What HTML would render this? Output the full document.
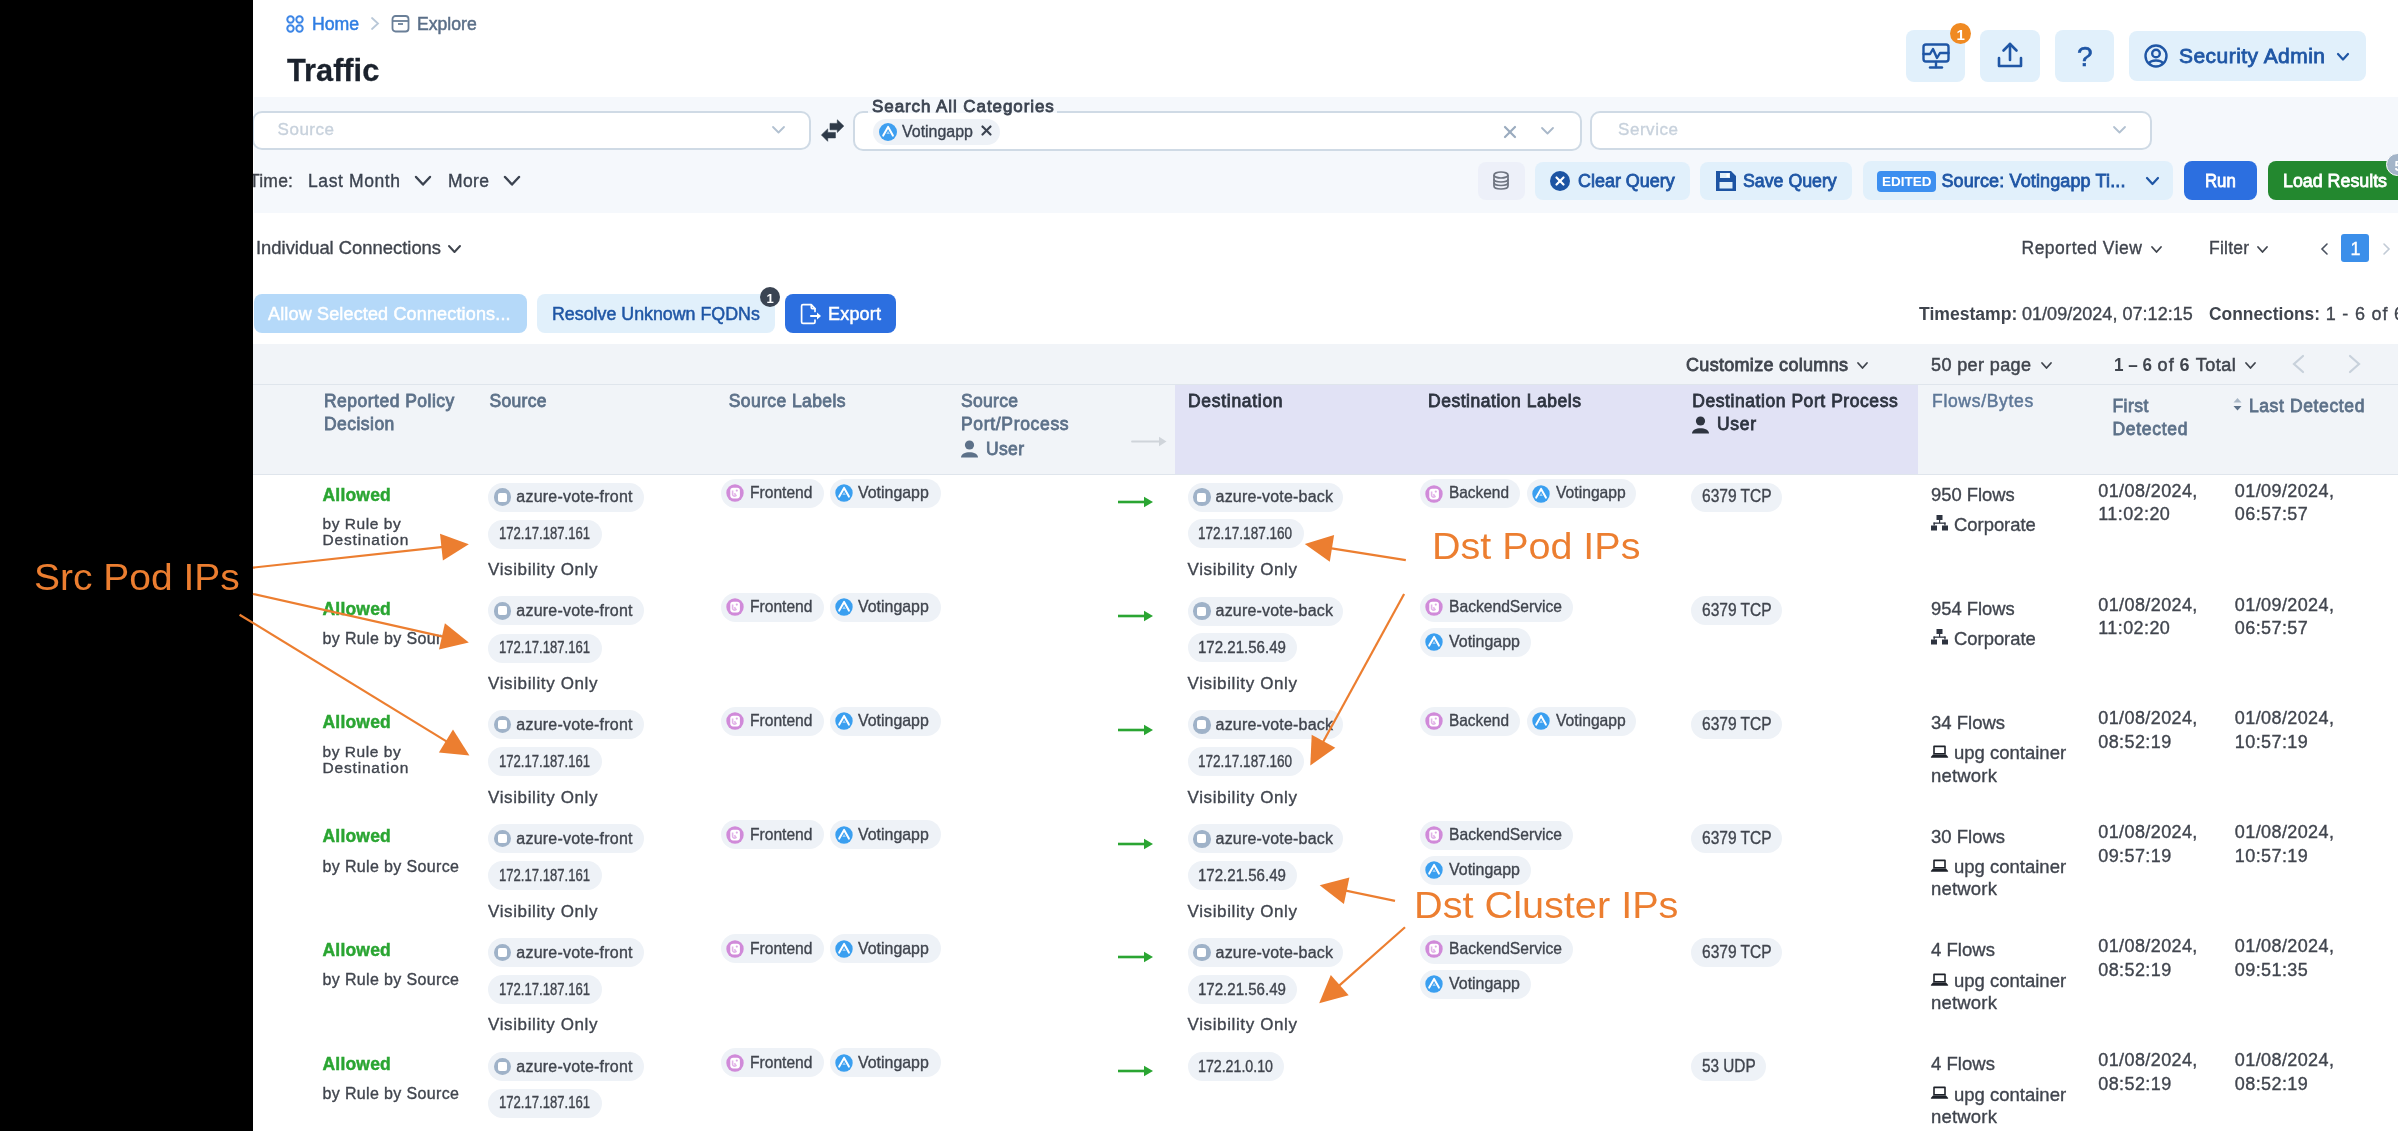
<!DOCTYPE html>
<html><head><meta charset="utf-8"><title>Traffic</title>
<style>
html,body{margin:0;padding:0;}
body{width:2398px;height:1131px;position:relative;overflow:hidden;background:#fff;font-family:"Liberation Sans",sans-serif;}
.t{position:absolute;white-space:nowrap;line-height:1;}
.r{position:absolute;}
.s{position:absolute;overflow:visible;}
</style></head><body>
<div style="position:absolute;left:0;top:0;width:2398px;height:1131px;will-change:transform;background:#fff">
<div class="r" style="left:0.00px;top:0.00px;width:253.00px;height:1131.00px;background:#000;border-radius:0px;"></div>
<div class="r" style="left:254.30px;top:97.30px;width:2143.70px;height:115.70px;background:#f5f8fc;border-radius:0px;"></div>
<div class="r" style="left:253.00px;top:343.50px;width:2145.00px;height:41.00px;background:#f1f4f8;border-radius:0px;"></div>
<div class="r" style="left:253.00px;top:384.50px;width:2145.00px;height:90.00px;background:#f1f4f8;border-radius:0px;"></div>
<div class="r" style="left:1174.50px;top:384.50px;width:743.50px;height:90.00px;background:#e1e2f5;border-radius:0px;"></div>
<div class="r" style="left:253.00px;top:383.50px;width:2145.00px;height:1.50px;background:#dfe5ec;border-radius:0px;"></div>
<div class="r" style="left:253.00px;top:473.50px;width:2145.00px;height:1.50px;background:#dfe5ec;border-radius:0px;"></div>
<svg class="s" style="left:285.00px;top:14.00px" width="20" height="20" viewBox="0 0 20 20"><g fill="none" stroke="#3d86e6" stroke-width="2"><circle cx="5.5" cy="5.5" r="3.2"/><circle cx="14.5" cy="5.5" r="3.2"/><circle cx="5.5" cy="14.5" r="3.2"/><circle cx="14.5" cy="14.5" r="3.2"/></g></svg>
<div class="t" style="left:311.60px;top:15.00px;font-size:18px;color:#2f7ee3;transform:scaleX(0.9821);transform-origin:0 0;-webkit-text-stroke:0.5px #2f7ee3;">Home</div>
<svg class="s" style="left:369.00px;top:16.00px" width="12" height="15" viewBox="0 0 12 15"><polyline points="3,2 9,7.5 3,13" fill="none" stroke="#b9c8d8" stroke-width="1.8" stroke-linecap="round"/></svg>
<svg class="s" style="left:391.00px;top:14.00px" width="19" height="19" viewBox="0 0 19 19"><g fill="none" stroke="#6a7f98" stroke-width="1.8"><rect x="1.5" y="2" width="16" height="15.5" rx="3"/><line x1="1.5" y1="7" x2="17.5" y2="7"/><line x1="7" y1="10" x2="12" y2="10"/></g></svg>
<div class="t" style="left:417.30px;top:15.00px;font-size:18px;color:#5b6f88;transform:scaleX(0.9784);transform-origin:0 0;-webkit-text-stroke:0.5px #5b6f88;">Explore</div>
<div class="t" style="left:287.20px;top:55.00px;font-size:31px;color:#1b222d;font-weight:700;transform:scaleX(0.9914);transform-origin:0 0;-webkit-text-stroke:0.3px #1b222d;">Traffic</div>
<div class="r" style="left:1906.00px;top:30.00px;width:59.00px;height:52.00px;background:#e1f0fb;border-radius:8px;"></div>
<div class="r" style="left:1980.00px;top:30.00px;width:60.00px;height:52.00px;background:#e1f0fb;border-radius:8px;"></div>
<div class="r" style="left:2055.00px;top:30.00px;width:59.00px;height:52.00px;background:#e1f0fb;border-radius:8px;"></div>
<div class="r" style="left:2129.00px;top:31.00px;width:237.00px;height:50.00px;background:#e1f0fb;border-radius:8px;"></div>
<svg class="s" style="left:1921.00px;top:42.00px" width="30" height="28" viewBox="0 0 30 28"><g fill="none" stroke="#1f56a5" stroke-width="2.4" stroke-linejoin="round" stroke-linecap="round"><rect x="2.5" y="2.5" width="25" height="17" rx="2.5"/><polyline points="2.5,12 9,12 12,7 16,16 19,11 27.5,11"/><line x1="15" y1="20" x2="15" y2="25"/><line x1="9" y1="25.5" x2="21" y2="25.5"/></g></svg>
<div class="r" style="left:1950px;top:23px;width:21px;height:21px;border-radius:50%;background:#f08a22;"></div>
<div class="t" style="left:1956.50px;top:27.00px;font-size:15px;color:#fff;font-weight:700;">1</div>
<svg class="s" style="left:1996.00px;top:41.00px" width="28" height="30" viewBox="0 0 28 30"><g fill="none" stroke="#1f56a5" stroke-width="2.6" stroke-linecap="round" stroke-linejoin="round"><polyline points="3,17 3,25 25,25 25,17"/><line x1="14" y1="3" x2="14" y2="19"/><polyline points="7.5,9.5 14,3 20.5,9.5"/></g></svg>
<div class="t" style="left:2077.00px;top:43.00px;font-size:28px;color:#1f56a5;-webkit-text-stroke:0.6px #1f56a5;">?</div>
<svg class="s" style="left:2143.00px;top:43.00px" width="26" height="26" viewBox="0 0 26 26"><g fill="none" stroke="#1f56a5" stroke-width="2.4"><circle cx="13" cy="13" r="10.5"/><circle cx="13" cy="10.5" r="3.8"/><path d="M6 20.5 C8 16.5 18 16.5 20 20.5"/></g></svg>
<div class="t" style="left:2179.00px;top:45.00px;font-size:21px;color:#1f56a5;letter-spacing:0.456px;-webkit-text-stroke:0.8px #1f56a5;">Security Admin</div>
<svg class="s" style="left:2336.00px;top:51.75px" width="14" height="9.5" viewBox="0 0 14 9.5"><polyline points="2,2 7.0,7.5 12,2" fill="none" stroke="#1f56a5" stroke-width="2.2" stroke-linecap="round" stroke-linejoin="round"/></svg>
<div class="r" style="left:252px;top:110.5px;width:559px;height:39px;border:2px solid #cfdae5;border-radius:10px;background:#fff;box-sizing:border-box"></div>
<div class="r" style="left:0.00px;top:0.00px;width:253.00px;height:1131.00px;background:#000;border-radius:0px;"></div>
<div class="t" style="left:277.60px;top:121.00px;font-size:17px;color:#c7d1dc;letter-spacing:0.502px;-webkit-text-stroke:0.35px #c7d1dc;">Source</div>
<svg class="s" style="left:770.50px;top:125.25px" width="15" height="9.5" viewBox="0 0 15 9.5"><polyline points="2,2 7.5,7.5 13,2" fill="none" stroke="#b2c1d1" stroke-width="1.8" stroke-linecap="round" stroke-linejoin="round"/></svg>
<svg class="s" style="left:820.00px;top:118.00px" width="26" height="26" viewBox="0 0 26 26"><g fill="#2e3a48" stroke="#2e3a48" stroke-width="0.6" stroke-linejoin="round"><path d="M10 5.4 H17.3 V1.8 L23.8 8.1 L17.3 14.4 V11.8 H10 Z"/><path d="M15.4 14.4 H7.7 V10.9 L1.4 16.9 L7.7 23.3 V19.9 H15.4 Z"/></g></svg>
<div class="r" style="left:853px;top:111px;width:729px;height:40px;border:2px solid #cfdae5;border-radius:10px;background:#fff;box-sizing:border-box"></div>
<div class="r" style="left:868.00px;top:109.00px;width:189.00px;height:4.20px;background:#f5f8fc;border-radius:0px;"></div>
<div class="t" style="left:872.00px;top:98.00px;font-size:17px;color:#3b4350;letter-spacing:0.917px;-webkit-text-stroke:0.8px #3b4350;">Search All Categories</div>
<div class="r" style="left:873.00px;top:118.50px;width:127.00px;height:26.30px;background:#eef2f7;border-radius:13px;"></div>
<div class="r" style="left:879px;top:123px;width:18px;height:18px;border-radius:50%;background:#3e9ff0"></div>
<svg class="s" style="left:879.00px;top:123.00px" width="18" height="18" viewBox="0 0 18 18"><polyline points="4.2,12.6 9.1,3.9 13.9,12.6" fill="none" stroke="#fff" stroke-width="2" stroke-linejoin="round" stroke-linecap="round"/><path d="M7.4 11 L9.1 8 L10.8 11 Z" fill="#9fd0f8"/></svg>
<div class="t" style="left:902.00px;top:124.00px;font-size:16px;color:#3b4350;transform:scaleX(0.9972);transform-origin:0 0;-webkit-text-stroke:0.35px #3b4350;">Votingapp</div>
<svg class="s" style="left:980.00px;top:124.00px" width="13" height="13" viewBox="0 0 13 13"><g stroke="#3b4350" stroke-width="2.2" stroke-linecap="round"><line x1="2.5" y1="2.5" x2="10.5" y2="10.5"/><line x1="10.5" y1="2.5" x2="2.5" y2="10.5"/></g></svg>
<svg class="s" style="left:1503.00px;top:125.00px" width="14" height="14" viewBox="0 0 14 14"><g stroke="#9aabbf" stroke-width="2.2" stroke-linecap="round"><line x1="2" y1="2" x2="12" y2="12"/><line x1="12" y1="2" x2="2" y2="12"/></g></svg>
<svg class="s" style="left:1540.00px;top:126.25px" width="15" height="9.5" viewBox="0 0 15 9.5"><polyline points="2,2 7.5,7.5 13,2" fill="none" stroke="#a9b8c9" stroke-width="1.8" stroke-linecap="round" stroke-linejoin="round"/></svg>
<div class="r" style="left:1590px;top:110.5px;width:562px;height:39px;border:2px solid #cfdae5;border-radius:10px;background:#fff;box-sizing:border-box"></div>
<div class="t" style="left:1618.00px;top:121.00px;font-size:17px;color:#c7d1dc;letter-spacing:0.551px;-webkit-text-stroke:0.35px #c7d1dc;">Service</div>
<svg class="s" style="left:2111.90px;top:125.25px" width="15" height="9.5" viewBox="0 0 15 9.5"><polyline points="2,2 7.5,7.5 13,2" fill="none" stroke="#b2c1d1" stroke-width="1.8" stroke-linecap="round" stroke-linejoin="round"/></svg>
<div class="t" style="left:249.00px;top:173.00px;font-size:17.5px;color:#40454e;letter-spacing:0.216px;-webkit-text-stroke:0.35px #40454e;">Time:</div>
<div class="r" style="left:0.00px;top:150.00px;width:253.00px;height:63.00px;background:#000;border-radius:0px;"></div>
<div class="t" style="left:308.00px;top:173.00px;font-size:17.5px;color:#3b4350;letter-spacing:0.607px;-webkit-text-stroke:0.35px #3b4350;">Last Month</div>
<svg class="s" style="left:413.50px;top:175.25px" width="18" height="11.5" viewBox="0 0 18 11.5"><polyline points="2,2 9.0,9.5 16,2" fill="none" stroke="#3b4350" stroke-width="2.4" stroke-linecap="round" stroke-linejoin="round"/></svg>
<div class="t" style="left:448.00px;top:173.00px;font-size:17.5px;color:#3b4350;letter-spacing:0.367px;-webkit-text-stroke:0.35px #3b4350;">More</div>
<svg class="s" style="left:502.50px;top:175.25px" width="18" height="11.5" viewBox="0 0 18 11.5"><polyline points="2,2 9.0,9.5 16,2" fill="none" stroke="#3b4350" stroke-width="2.4" stroke-linecap="round" stroke-linejoin="round"/></svg>
<div class="r" style="left:1478.00px;top:161.70px;width:47.00px;height:38.30px;background:#edf0f9;border-radius:8px;"></div>
<svg class="s" style="left:1491.00px;top:170.00px" width="20" height="22" viewBox="0 0 20 22"><g fill="none" stroke="#6e7480" stroke-width="1.7"><ellipse cx="10" cy="5" rx="7" ry="3"/><path d="M3 5 V16 C3 20 17 20 17 16 V5"/><path d="M3 9 C3 13 17 13 17 9"/><path d="M3 12.5 C3 16.5 17 16.5 17 12.5"/></g></svg>
<div class="r" style="left:1535.00px;top:161.70px;width:155.00px;height:38.30px;background:#e1f0fb;border-radius:8px;"></div>
<div class="r" style="left:1549.7px;top:170.8px;width:20px;height:20px;border-radius:50%;background:#1d54a3"></div>
<svg class="s" style="left:1549.70px;top:170.80px" width="20" height="20" viewBox="0 0 20 20"><g stroke="#fff" stroke-width="2.2" stroke-linecap="round"><line x1="6.5" y1="6.5" x2="13.5" y2="13.5"/><line x1="13.5" y1="6.5" x2="6.5" y2="13.5"/></g></svg>
<div class="t" style="left:1578.00px;top:172.00px;font-size:18px;color:#1f56a5;transform:scaleX(0.9967);transform-origin:0 0;-webkit-text-stroke:0.8px #1f56a5;">Clear Query</div>
<div class="r" style="left:1699.70px;top:161.70px;width:152.00px;height:38.30px;background:#e1f0fb;border-radius:8px;"></div>
<svg class="s" style="left:1715.00px;top:170.00px" width="22" height="22" viewBox="0 0 22 22"><g fill="#1d54a3"><path d="M1 1 H16 L21 6 V21 H1 Z M5 3 V8 H15 V3 Z M4.5 12 V18.5 H17.5 V12 Z" fill-rule="evenodd"/><rect x="11.5" y="3.5" width="2.5" height="3.5" fill="#fff"/></g></svg>
<div class="t" style="left:1743.00px;top:172.00px;font-size:18px;color:#1f56a5;transform:scaleX(0.9859);transform-origin:0 0;-webkit-text-stroke:0.8px #1f56a5;">Save Query</div>
<div class="r" style="left:1862.60px;top:161.00px;width:310.40px;height:39.00px;background:#e1f0fb;border-radius:8px;"></div>
<div class="r" style="left:1877.40px;top:171.00px;width:59.00px;height:20.60px;background:#3c8ff0;border-radius:4px;"></div>
<div class="t" style="left:1882.00px;top:175.00px;font-size:13.5px;color:#fff;font-weight:700;">EDITED</div>
<div class="t" style="left:1941.40px;top:172.00px;font-size:18px;color:#1f56a5;letter-spacing:0.133px;-webkit-text-stroke:0.8px #1f56a5;">Source: Votingapp Ti...</div>
<svg class="s" style="left:2144.50px;top:175.50px" width="15" height="10" viewBox="0 0 15 10"><polyline points="2,2 7.5,8 13,2" fill="none" stroke="#1f56a5" stroke-width="2.2" stroke-linecap="round" stroke-linejoin="round"/></svg>
<div class="r" style="left:2183.60px;top:161.00px;width:73.80px;height:39.00px;background:#2c6fe0;border-radius:8px;"></div>
<div class="t" style="left:2205.40px;top:172.00px;font-size:18px;color:#fff;transform:scaleX(0.9325);transform-origin:0 0;-webkit-text-stroke:0.8px #fff;">Run</div>
<div class="r" style="left:2267.70px;top:161.00px;width:142.30px;height:39.00px;background:#23882f;border-radius:8px;"></div>
<div class="t" style="left:2283.00px;top:172.00px;font-size:18px;color:#fff;transform:scaleX(0.9902);transform-origin:0 0;-webkit-text-stroke:0.8px #fff;">Load Results</div>
<div class="r" style="left:2386px;top:153.3px;width:23px;height:23px;border-radius:50%;background:#a3b4c8;border:1.6px solid #fff;box-sizing:border-box"></div>
<div class="t" style="left:2394.50px;top:159.00px;font-size:14px;color:#fff;font-weight:700;">5</div>
<div class="t" style="left:255.60px;top:239.00px;font-size:18.5px;color:#40454e;transform:scaleX(0.9940);transform-origin:0 0;-webkit-text-stroke:0.35px #40454e;">Individual Connections</div>
<svg class="s" style="left:447.00px;top:244.00px" width="15" height="10" viewBox="0 0 15 10"><polyline points="2,2 7.5,8 13,2" fill="none" stroke="#40454e" stroke-width="2" stroke-linecap="round" stroke-linejoin="round"/></svg>
<div class="t" style="left:2021.50px;top:240.00px;font-size:17.5px;color:#40454e;letter-spacing:0.497px;-webkit-text-stroke:0.35px #40454e;">Reported View</div>
<svg class="s" style="left:2150.00px;top:244.50px" width="13" height="9" viewBox="0 0 13 9"><polyline points="2,2 6.5,7 11,2" fill="none" stroke="#40454e" stroke-width="1.8" stroke-linecap="round" stroke-linejoin="round"/></svg>
<div class="t" style="left:2209.00px;top:240.00px;font-size:17.5px;color:#40454e;letter-spacing:0.230px;-webkit-text-stroke:0.35px #40454e;">Filter</div>
<svg class="s" style="left:2256.00px;top:244.50px" width="13" height="9" viewBox="0 0 13 9"><polyline points="2,2 6.5,7 11,2" fill="none" stroke="#40454e" stroke-width="1.8" stroke-linecap="round" stroke-linejoin="round"/></svg>
<svg class="s" style="left:2319.00px;top:242.00px" width="12" height="14" viewBox="0 0 12 14"><polyline points="8,2 3,7 8,12" fill="none" stroke="#4a5260" stroke-width="1.6" stroke-linecap="round"/></svg>
<div class="r" style="left:2341.00px;top:234.30px;width:28.00px;height:28.10px;background:#3b8fea;border-radius:3px;"></div>
<div class="t" style="left:2350.50px;top:240.00px;font-size:18px;color:#fff;-webkit-text-stroke:0.35px #fff;">1</div>
<svg class="s" style="left:2380.00px;top:242.00px" width="12" height="14" viewBox="0 0 12 14"><polyline points="4,2 9,7 4,12" fill="none" stroke="#c2cbd6" stroke-width="1.6" stroke-linecap="round"/></svg>
<div class="r" style="left:254.40px;top:294.40px;width:272.60px;height:38.60px;background:#b5d9f9;border-radius:8px;"></div>
<div class="t" style="left:268.00px;top:305.00px;font-size:18px;color:#ffffff;letter-spacing:0.159px;-webkit-text-stroke:0.5px #ffffff;">Allow Selected Connections...</div>
<div class="r" style="left:537.00px;top:294.30px;width:237.80px;height:38.70px;background:#e1f0fb;border-radius:8px;"></div>
<div class="t" style="left:552.00px;top:305.00px;font-size:18px;color:#1f56a5;transform:scaleX(0.9892);transform-origin:0 0;-webkit-text-stroke:0.5px #1f56a5;">Resolve Unknown FQDNs</div>
<div class="r" style="left:760px;top:287.4px;width:20px;height:20px;border-radius:50%;background:#3a4452"></div>
<div class="t" style="left:766.50px;top:292.00px;font-size:13px;color:#fff;font-weight:700;">1</div>
<div class="r" style="left:785.00px;top:294.30px;width:111.00px;height:38.70px;background:#2c6fe0;border-radius:8px;"></div>
<svg class="s" style="left:799.00px;top:302.00px" width="24" height="24" viewBox="0 0 24 24"><g fill="none" stroke="#fff" stroke-width="1.7" stroke-linejoin="round" stroke-linecap="round"><path d="M16 9.5 V6.5 L12.2 2.6 H4 Q2.6 2.6 2.6 4 V20 Q2.6 21.4 4 21.4 H14.6 Q16 21.4 16 20 V18.2"/><path d="M12.3 2.8 V5.6 Q12.3 6.6 13.3 6.6 H15.8"/><line x1="12" y1="14" x2="18.5" y2="14" stroke-width="2.2"/></g><path d="M18 10.6 L22 14 L18 17.4 Z" fill="#fff"/></svg>
<div class="t" style="left:828.00px;top:305.00px;font-size:18px;color:#fff;letter-spacing:0.196px;-webkit-text-stroke:0.5px #fff;">Export</div>
<div class="t" style="left:1918.70px;top:305.00px;font-size:18px;color:#40454e;font-weight:700;transform:scaleX(0.9761);transform-origin:0 0;">Timestamp:</div>
<div class="t" style="left:2022.00px;top:305.00px;font-size:18px;color:#40454e;letter-spacing:0.032px;-webkit-text-stroke:0.35px #40454e;">01/09/2024, 07:12:15</div>
<div class="t" style="left:2209.40px;top:305.00px;font-size:18px;color:#40454e;font-weight:700;transform:scaleX(0.9659);transform-origin:0 0;">Connections:</div>
<div class="t" style="left:2325.70px;top:305.00px;font-size:18px;color:#40454e;letter-spacing:0.810px;-webkit-text-stroke:0.35px #40454e;">1 - 6 of 6</div>
<div class="t" style="left:1686.00px;top:356.00px;font-size:18px;color:#40454e;letter-spacing:0.309px;-webkit-text-stroke:0.8px #40454e;">Customize columns</div>
<svg class="s" style="left:1856.00px;top:360.50px" width="13" height="9" viewBox="0 0 13 9"><polyline points="2,2 6.5,7 11,2" fill="none" stroke="#40454e" stroke-width="1.8" stroke-linecap="round" stroke-linejoin="round"/></svg>
<div class="t" style="left:1931.00px;top:356.00px;font-size:18px;color:#40454e;letter-spacing:0.388px;-webkit-text-stroke:0.5px #40454e;">50 per page</div>
<svg class="s" style="left:2040.00px;top:360.50px" width="13" height="9" viewBox="0 0 13 9"><polyline points="2,2 6.5,7 11,2" fill="none" stroke="#40454e" stroke-width="1.8" stroke-linecap="round" stroke-linejoin="round"/></svg>
<div class="t" style="left:2113.80px;top:356.00px;font-size:18px;color:#40454e;font-weight:700;transform:scaleX(0.9488);transform-origin:0 0;">1 – 6</div>
<div class="t" style="left:2157.40px;top:356.00px;font-size:18px;color:#40454e;letter-spacing:1.370px;-webkit-text-stroke:0.55px #40454e;">of</div>
<div class="t" style="left:2179.40px;top:356.00px;font-size:18px;color:#40454e;font-weight:700;">6</div>
<div class="t" style="left:2195.70px;top:356.00px;font-size:18px;color:#40454e;letter-spacing:0.530px;-webkit-text-stroke:0.55px #40454e;">Total</div>
<svg class="s" style="left:2243.50px;top:360.50px" width="13" height="9" viewBox="0 0 13 9"><polyline points="2,2 6.5,7 11,2" fill="none" stroke="#40454e" stroke-width="1.8" stroke-linecap="round" stroke-linejoin="round"/></svg>
<svg class="s" style="left:2290.00px;top:353.00px" width="16" height="22" viewBox="0 0 16 22"><polyline points="13,3 4,11 13,19" fill="none" stroke="#c8d1db" stroke-width="2.2" stroke-linecap="round"/></svg>
<svg class="s" style="left:2347.00px;top:353.00px" width="16" height="22" viewBox="0 0 16 22"><polyline points="3,3 12,11 3,19" fill="none" stroke="#c8d1db" stroke-width="2.2" stroke-linecap="round"/></svg>
<div class="t" style="left:324.00px;top:393.00px;font-size:17.5px;color:#5d7189;letter-spacing:0.482px;-webkit-text-stroke:0.8px #5d7189;">Reported Policy</div>
<div class="t" style="left:324.00px;top:416.00px;font-size:17.5px;color:#5d7189;letter-spacing:0.455px;-webkit-text-stroke:0.8px #5d7189;">Decision</div>
<div class="t" style="left:489.40px;top:393.00px;font-size:17.5px;color:#5d7189;letter-spacing:0.325px;-webkit-text-stroke:0.8px #5d7189;">Source</div>
<div class="t" style="left:728.80px;top:393.00px;font-size:17.5px;color:#5d7189;letter-spacing:0.399px;-webkit-text-stroke:0.8px #5d7189;">Source Labels</div>
<div class="t" style="left:961.00px;top:393.00px;font-size:17.5px;color:#5d7189;letter-spacing:0.305px;-webkit-text-stroke:0.8px #5d7189;">Source</div>
<div class="t" style="left:961.00px;top:416.00px;font-size:17.5px;color:#5d7189;letter-spacing:0.674px;-webkit-text-stroke:0.8px #5d7189;">Port/Process</div>
<svg class="s" style="left:960.00px;top:440.00px" width="19" height="18" viewBox="0 0 19 18"><g fill="#5d7189"><circle cx="9.5" cy="5" r="4.6"/><path d="M1 17.5 C1 10.5 18 10.5 18 17.5 Z"/></g></svg>
<div class="t" style="left:986.00px;top:441.00px;font-size:17.5px;color:#5d7189;letter-spacing:0.358px;-webkit-text-stroke:0.8px #5d7189;">User</div>
<svg class="s" style="left:1130.00px;top:435.00px" width="38" height="14" viewBox="0 0 38 14"><line x1="2" y1="6.5" x2="30" y2="6.5" stroke="#cfd4da" stroke-width="1.8" stroke-linecap="round"/><path d="M29 1.8 L36.5 6.5 L29 11.2 Z" fill="#cfd4da"/></svg>
<div class="t" style="left:1188.00px;top:393.00px;font-size:17.5px;color:#2e3440;letter-spacing:0.701px;-webkit-text-stroke:0.8px #2e3440;">Destination</div>
<div class="t" style="left:1428.00px;top:393.00px;font-size:17.5px;color:#2e3440;letter-spacing:0.528px;-webkit-text-stroke:0.8px #2e3440;">Destination Labels</div>
<div class="t" style="left:1692.30px;top:393.00px;font-size:17.5px;color:#2e3440;letter-spacing:0.557px;-webkit-text-stroke:0.8px #2e3440;">Destination Port Process</div>
<svg class="s" style="left:1691.00px;top:416.00px" width="19" height="18" viewBox="0 0 19 18"><g fill="#2e3440"><circle cx="9.5" cy="5" r="4.6"/><path d="M1 17.5 C1 10.5 18 10.5 18 17.5 Z"/></g></svg>
<div class="t" style="left:1717.00px;top:416.00px;font-size:17.5px;color:#2e3440;letter-spacing:0.692px;-webkit-text-stroke:0.8px #2e3440;">User</div>
<div class="t" style="left:1932.00px;top:393.00px;font-size:17.5px;color:#5f7898;letter-spacing:0.688px;-webkit-text-stroke:0.5px #5f7898;">Flows/Bytes</div>
<div class="t" style="left:2112.40px;top:398.00px;font-size:17.5px;color:#5d7189;letter-spacing:0.516px;-webkit-text-stroke:0.8px #5d7189;">First</div>
<div class="t" style="left:2112.40px;top:421.00px;font-size:17.5px;color:#5d7189;letter-spacing:0.730px;-webkit-text-stroke:0.8px #5d7189;">Detected</div>
<svg class="s" style="left:2232.00px;top:396.00px" width="11" height="17" viewBox="0 0 11 17"><g fill="#aab7c6"><path d="M1.5 6.5 L5.5 2 L9.5 6.5 Z"/></g><g fill="#5d7189"><path d="M1.5 10 L5.5 14.5 L9.5 10 Z"/></g></svg>
<div class="t" style="left:2248.90px;top:398.00px;font-size:17.5px;color:#5d7189;letter-spacing:0.627px;-webkit-text-stroke:0.8px #5d7189;">Last Detected</div>
<div class="t" style="left:322.50px;top:487.00px;font-size:17.5px;color:#2aa532;font-weight:700;letter-spacing:0.198px;-webkit-text-stroke:0.45px #2aa532;">Allowed</div>
<div class="t" style="left:322.50px;top:516.00px;font-size:15.5px;color:#40454e;letter-spacing:0.563px;-webkit-text-stroke:0.35px #40454e;">by Rule by</div>
<div class="t" style="left:322.50px;top:532.00px;font-size:15.5px;color:#40454e;letter-spacing:0.822px;-webkit-text-stroke:0.35px #40454e;">Destination</div>
<div class="r" style="left:487.50px;top:482.50px;width:156.50px;height:29.00px;background:#eef2f7;border-radius:14.5px;"></div>
<div class="r" style="left:493.50px;top:488.25px;width:17.5px;height:17.5px;border-radius:50%;background:#9fb2c8"></div>
<div class="r" style="left:497.75px;top:492.50px;width:9px;height:9px;border-radius:2px;background:#fff"></div>
<div class="t" style="left:516.30px;top:489.00px;font-size:16px;color:#40454e;letter-spacing:0.216px;-webkit-text-stroke:0.35px #40454e;">azure-vote-front</div>
<div class="r" style="left:487.50px;top:519.70px;width:114.20px;height:29.00px;background:#eef2f7;border-radius:14.5px;"></div>
<div class="t" style="left:499.00px;top:526.00px;font-size:16px;color:#40454e;transform:scaleX(0.8183);transform-origin:0 0;-webkit-text-stroke:0.35px #40454e;">172.17.187.161</div>
<div class="t" style="left:488.00px;top:561.00px;font-size:17px;color:#40454e;letter-spacing:0.621px;-webkit-text-stroke:0.35px #40454e;">Visibility Only</div>
<div class="r" style="left:721.00px;top:478.80px;width:102.80px;height:29.00px;background:#eef2f7;border-radius:14.5px;"></div>
<svg class="s" style="left:726.40px;top:484.40px" width="18" height="18" viewBox="0 0 18 18"><circle cx="9" cy="9" r="8.7" fill="#d08ad9"/><rect x="4.3" y="3.8" width="9.6" height="10.6" rx="2.8" fill="#fff"/><path d="M6.6 6.4 V10.6 C6.6 12 8.6 12.6 10 11.6 L8.4 9.2" fill="none" stroke="#e2b4e8" stroke-width="1.6"/><circle cx="10.8" cy="6.6" r="1.1" fill="#dcaae3"/></svg>
<div class="t" style="left:750.00px;top:484.00px;font-size:16.5px;color:#40454e;transform:scaleX(0.9458);transform-origin:0 0;-webkit-text-stroke:0.35px #40454e;">Frontend</div>
<div class="r" style="left:830.00px;top:478.80px;width:110.60px;height:29.00px;background:#eef2f7;border-radius:14.5px;"></div>
<svg class="s" style="left:835.40px;top:484.40px" width="18" height="18" viewBox="0 0 18 18"><circle cx="9" cy="9" r="8.7" fill="#3a9ff0"/><polyline points="4.2,12.6 9.1,3.9 13.9,12.6" fill="none" stroke="#fff" stroke-width="2" stroke-linejoin="round" stroke-linecap="round"/><path d="M7.4 11 L9.1 8 L10.8 11 Z" fill="#9fd0f8"/></svg>
<div class="t" style="left:858.00px;top:484.00px;font-size:16.5px;color:#40454e;transform:scaleX(0.9642);transform-origin:0 0;-webkit-text-stroke:0.35px #40454e;">Votingapp</div>
<svg class="s" style="left:1116.00px;top:495.00px" width="40" height="14" viewBox="0 0 40 14"><line x1="2" y1="7" x2="31" y2="7" stroke="#2aa532" stroke-width="2.6"/><path d="M28 1.8 L37 7 L28 12.2 Z" fill="#2aa532"/></svg>
<div class="r" style="left:1187.50px;top:482.75px;width:155.50px;height:29.00px;background:#eef2f7;border-radius:14.5px;"></div>
<div class="r" style="left:1193.00px;top:488.45px;width:17.5px;height:17.5px;border-radius:50%;background:#9fb2c8"></div>
<div class="r" style="left:1197.25px;top:492.70px;width:9px;height:9px;border-radius:2px;background:#fff"></div>
<div class="t" style="left:1215.60px;top:489.00px;font-size:16px;color:#40454e;letter-spacing:0.186px;-webkit-text-stroke:0.35px #40454e;">azure-vote-back</div>
<div class="r" style="left:1187.50px;top:519.40px;width:116.25px;height:29.00px;background:#eef2f7;border-radius:14.5px;"></div>
<div class="t" style="left:1198.00px;top:526.00px;font-size:16px;color:#40454e;transform:scaleX(0.8453);transform-origin:0 0;-webkit-text-stroke:0.35px #40454e;">172.17.187.160</div>
<div class="t" style="left:1187.50px;top:561.00px;font-size:17px;color:#40454e;letter-spacing:0.621px;-webkit-text-stroke:0.35px #40454e;">Visibility Only</div>
<div class="r" style="left:1419.70px;top:479.20px;width:100.30px;height:29.00px;background:#eef2f7;border-radius:14.5px;"></div>
<svg class="s" style="left:1425.20px;top:484.60px" width="18" height="18" viewBox="0 0 18 18"><circle cx="9" cy="9" r="8.7" fill="#d08ad9"/><rect x="4.3" y="3.8" width="9.6" height="10.6" rx="2.8" fill="#fff"/><path d="M6.6 6.4 V10.6 C6.6 12 8.6 12.6 10 11.6 L8.4 9.2" fill="none" stroke="#e2b4e8" stroke-width="1.6"/><circle cx="10.8" cy="6.6" r="1.1" fill="#dcaae3"/></svg>
<div class="t" style="left:1449.00px;top:484.00px;font-size:16.5px;color:#40454e;transform:scaleX(0.9348);transform-origin:0 0;-webkit-text-stroke:0.35px #40454e;">Backend</div>
<div class="r" style="left:1526.70px;top:479.20px;width:109.60px;height:29.00px;background:#eef2f7;border-radius:14.5px;"></div>
<svg class="s" style="left:1532.20px;top:484.60px" width="18" height="18" viewBox="0 0 18 18"><circle cx="9" cy="9" r="8.7" fill="#3a9ff0"/><polyline points="4.2,12.6 9.1,3.9 13.9,12.6" fill="none" stroke="#fff" stroke-width="2" stroke-linejoin="round" stroke-linecap="round"/><path d="M7.4 11 L9.1 8 L10.8 11 Z" fill="#9fd0f8"/></svg>
<div class="t" style="left:1556.00px;top:484.00px;font-size:16.5px;color:#40454e;transform:scaleX(0.9506);transform-origin:0 0;-webkit-text-stroke:0.35px #40454e;">Votingapp</div>
<div class="r" style="left:1690.80px;top:482.50px;width:91.70px;height:29.00px;background:#eef2f7;border-radius:14.5px;"></div>
<div class="t" style="left:1702.00px;top:488.00px;font-size:17.5px;color:#40454e;transform:scaleX(0.8880);transform-origin:0 0;-webkit-text-stroke:0.35px #40454e;">6379 TCP</div>
<div class="t" style="left:1931.00px;top:486.00px;font-size:18.5px;color:#40454e;transform:scaleX(0.9934);transform-origin:0 0;-webkit-text-stroke:0.35px #40454e;">950 Flows</div>
<svg class="s" style="left:1930.00px;top:514.00px" width="19" height="18" viewBox="0 0 19 18"><g fill="#2e3440"><rect x="6.5" y="1" width="6" height="5"/><rect x="1" y="11.5" width="6" height="5"/><rect x="12" y="11.5" width="6" height="5"/><rect x="9" y="6" width="1.2" height="3"/><rect x="3.5" y="8.5" width="12" height="1.3"/><rect x="3.5" y="8.5" width="1.3" height="3"/><rect x="14.3" y="8.5" width="1.3" height="3"/></g></svg>
<div class="t" style="left:1953.60px;top:516.00px;font-size:18.5px;color:#40454e;transform:scaleX(0.9947);transform-origin:0 0;-webkit-text-stroke:0.35px #40454e;">Corporate</div>
<div class="t" style="left:2098.30px;top:482.00px;font-size:18px;color:#40454e;letter-spacing:0.397px;-webkit-text-stroke:0.35px #40454e;">01/08/2024,</div>
<div class="t" style="left:2098.30px;top:505.00px;font-size:18px;color:#40454e;letter-spacing:0.397px;-webkit-text-stroke:0.35px #40454e;">11:02:20</div>
<div class="t" style="left:2234.80px;top:482.00px;font-size:18px;color:#40454e;letter-spacing:0.407px;-webkit-text-stroke:0.35px #40454e;">01/09/2024,</div>
<div class="t" style="left:2234.80px;top:505.00px;font-size:18px;color:#40454e;letter-spacing:0.407px;-webkit-text-stroke:0.35px #40454e;">06:57:57</div>
<div class="t" style="left:322.50px;top:601.00px;font-size:17.5px;color:#2aa532;font-weight:700;letter-spacing:0.198px;-webkit-text-stroke:0.45px #2aa532;">Allowed</div>
<div class="t" style="left:322.50px;top:631.00px;font-size:16px;color:#40454e;letter-spacing:0.361px;-webkit-text-stroke:0.35px #40454e;">by Rule by Source</div>
<div class="r" style="left:487.50px;top:596.35px;width:156.50px;height:29.00px;background:#eef2f7;border-radius:14.5px;"></div>
<div class="r" style="left:493.50px;top:602.10px;width:17.5px;height:17.5px;border-radius:50%;background:#9fb2c8"></div>
<div class="r" style="left:497.75px;top:606.35px;width:9px;height:9px;border-radius:2px;background:#fff"></div>
<div class="t" style="left:516.30px;top:603.00px;font-size:16px;color:#40454e;letter-spacing:0.216px;-webkit-text-stroke:0.35px #40454e;">azure-vote-front</div>
<div class="r" style="left:487.50px;top:633.55px;width:114.20px;height:29.00px;background:#eef2f7;border-radius:14.5px;"></div>
<div class="t" style="left:499.00px;top:640.00px;font-size:16px;color:#40454e;transform:scaleX(0.8183);transform-origin:0 0;-webkit-text-stroke:0.35px #40454e;">172.17.187.161</div>
<div class="t" style="left:488.00px;top:675.00px;font-size:17px;color:#40454e;letter-spacing:0.621px;-webkit-text-stroke:0.35px #40454e;">Visibility Only</div>
<div class="r" style="left:721.00px;top:592.65px;width:102.80px;height:29.00px;background:#eef2f7;border-radius:14.5px;"></div>
<svg class="s" style="left:726.40px;top:598.25px" width="18" height="18" viewBox="0 0 18 18"><circle cx="9" cy="9" r="8.7" fill="#d08ad9"/><rect x="4.3" y="3.8" width="9.6" height="10.6" rx="2.8" fill="#fff"/><path d="M6.6 6.4 V10.6 C6.6 12 8.6 12.6 10 11.6 L8.4 9.2" fill="none" stroke="#e2b4e8" stroke-width="1.6"/><circle cx="10.8" cy="6.6" r="1.1" fill="#dcaae3"/></svg>
<div class="t" style="left:750.00px;top:598.00px;font-size:16.5px;color:#40454e;transform:scaleX(0.9458);transform-origin:0 0;-webkit-text-stroke:0.35px #40454e;">Frontend</div>
<div class="r" style="left:830.00px;top:592.65px;width:110.60px;height:29.00px;background:#eef2f7;border-radius:14.5px;"></div>
<svg class="s" style="left:835.40px;top:598.25px" width="18" height="18" viewBox="0 0 18 18"><circle cx="9" cy="9" r="8.7" fill="#3a9ff0"/><polyline points="4.2,12.6 9.1,3.9 13.9,12.6" fill="none" stroke="#fff" stroke-width="2" stroke-linejoin="round" stroke-linecap="round"/><path d="M7.4 11 L9.1 8 L10.8 11 Z" fill="#9fd0f8"/></svg>
<div class="t" style="left:858.00px;top:598.00px;font-size:16.5px;color:#40454e;transform:scaleX(0.9642);transform-origin:0 0;-webkit-text-stroke:0.35px #40454e;">Votingapp</div>
<svg class="s" style="left:1116.00px;top:608.85px" width="40" height="14" viewBox="0 0 40 14"><line x1="2" y1="7" x2="31" y2="7" stroke="#2aa532" stroke-width="2.6"/><path d="M28 1.8 L37 7 L28 12.2 Z" fill="#2aa532"/></svg>
<div class="r" style="left:1187.50px;top:596.60px;width:155.50px;height:29.00px;background:#eef2f7;border-radius:14.5px;"></div>
<div class="r" style="left:1193.00px;top:602.30px;width:17.5px;height:17.5px;border-radius:50%;background:#9fb2c8"></div>
<div class="r" style="left:1197.25px;top:606.55px;width:9px;height:9px;border-radius:2px;background:#fff"></div>
<div class="t" style="left:1215.60px;top:603.00px;font-size:16px;color:#40454e;letter-spacing:0.186px;-webkit-text-stroke:0.35px #40454e;">azure-vote-back</div>
<div class="r" style="left:1187.50px;top:633.25px;width:109.80px;height:29.00px;background:#eef2f7;border-radius:14.5px;"></div>
<div class="t" style="left:1198.00px;top:640.00px;font-size:16px;color:#40454e;transform:scaleX(0.9407);transform-origin:0 0;-webkit-text-stroke:0.35px #40454e;">172.21.56.49</div>
<div class="t" style="left:1187.50px;top:675.00px;font-size:17px;color:#40454e;letter-spacing:0.621px;-webkit-text-stroke:0.35px #40454e;">Visibility Only</div>
<div class="r" style="left:1419.70px;top:593.05px;width:153.30px;height:29.00px;background:#eef2f7;border-radius:14.5px;"></div>
<svg class="s" style="left:1425.20px;top:598.45px" width="18" height="18" viewBox="0 0 18 18"><circle cx="9" cy="9" r="8.7" fill="#d08ad9"/><rect x="4.3" y="3.8" width="9.6" height="10.6" rx="2.8" fill="#fff"/><path d="M6.6 6.4 V10.6 C6.6 12 8.6 12.6 10 11.6 L8.4 9.2" fill="none" stroke="#e2b4e8" stroke-width="1.6"/><circle cx="10.8" cy="6.6" r="1.1" fill="#dcaae3"/></svg>
<div class="t" style="left:1449.00px;top:598.00px;font-size:16.5px;color:#40454e;transform:scaleX(0.9479);transform-origin:0 0;-webkit-text-stroke:0.35px #40454e;">BackendService</div>
<div class="r" style="left:1419.70px;top:628.00px;width:111.10px;height:29.00px;background:#eef2f7;border-radius:14.5px;"></div>
<svg class="s" style="left:1425.20px;top:633.45px" width="18" height="18" viewBox="0 0 18 18"><circle cx="9" cy="9" r="8.7" fill="#3a9ff0"/><polyline points="4.2,12.6 9.1,3.9 13.9,12.6" fill="none" stroke="#fff" stroke-width="2" stroke-linejoin="round" stroke-linecap="round"/><path d="M7.4 11 L9.1 8 L10.8 11 Z" fill="#9fd0f8"/></svg>
<div class="t" style="left:1449.00px;top:633.00px;font-size:16.5px;color:#40454e;transform:scaleX(0.9670);transform-origin:0 0;-webkit-text-stroke:0.35px #40454e;">Votingapp</div>
<div class="r" style="left:1690.80px;top:596.35px;width:91.70px;height:29.00px;background:#eef2f7;border-radius:14.5px;"></div>
<div class="t" style="left:1702.00px;top:602.00px;font-size:17.5px;color:#40454e;transform:scaleX(0.8880);transform-origin:0 0;-webkit-text-stroke:0.35px #40454e;">6379 TCP</div>
<div class="t" style="left:1931.00px;top:600.00px;font-size:18.5px;color:#40454e;transform:scaleX(0.9934);transform-origin:0 0;-webkit-text-stroke:0.35px #40454e;">954 Flows</div>
<svg class="s" style="left:1930.00px;top:627.85px" width="19" height="18" viewBox="0 0 19 18"><g fill="#2e3440"><rect x="6.5" y="1" width="6" height="5"/><rect x="1" y="11.5" width="6" height="5"/><rect x="12" y="11.5" width="6" height="5"/><rect x="9" y="6" width="1.2" height="3"/><rect x="3.5" y="8.5" width="12" height="1.3"/><rect x="3.5" y="8.5" width="1.3" height="3"/><rect x="14.3" y="8.5" width="1.3" height="3"/></g></svg>
<div class="t" style="left:1953.60px;top:630.00px;font-size:18.5px;color:#40454e;transform:scaleX(0.9947);transform-origin:0 0;-webkit-text-stroke:0.35px #40454e;">Corporate</div>
<div class="t" style="left:2098.30px;top:596.00px;font-size:18px;color:#40454e;letter-spacing:0.397px;-webkit-text-stroke:0.35px #40454e;">01/08/2024,</div>
<div class="t" style="left:2098.30px;top:619.00px;font-size:18px;color:#40454e;letter-spacing:0.397px;-webkit-text-stroke:0.35px #40454e;">11:02:20</div>
<div class="t" style="left:2234.80px;top:596.00px;font-size:18px;color:#40454e;letter-spacing:0.407px;-webkit-text-stroke:0.35px #40454e;">01/09/2024,</div>
<div class="t" style="left:2234.80px;top:619.00px;font-size:18px;color:#40454e;letter-spacing:0.407px;-webkit-text-stroke:0.35px #40454e;">06:57:57</div>
<div class="t" style="left:322.50px;top:714.00px;font-size:17.5px;color:#2aa532;font-weight:700;letter-spacing:0.198px;-webkit-text-stroke:0.45px #2aa532;">Allowed</div>
<div class="t" style="left:322.50px;top:744.00px;font-size:15.5px;color:#40454e;letter-spacing:0.563px;-webkit-text-stroke:0.35px #40454e;">by Rule by</div>
<div class="t" style="left:322.50px;top:760.00px;font-size:15.5px;color:#40454e;letter-spacing:0.822px;-webkit-text-stroke:0.35px #40454e;">Destination</div>
<div class="r" style="left:487.50px;top:710.20px;width:156.50px;height:29.00px;background:#eef2f7;border-radius:14.5px;"></div>
<div class="r" style="left:493.50px;top:715.95px;width:17.5px;height:17.5px;border-radius:50%;background:#9fb2c8"></div>
<div class="r" style="left:497.75px;top:720.20px;width:9px;height:9px;border-radius:2px;background:#fff"></div>
<div class="t" style="left:516.30px;top:717.00px;font-size:16px;color:#40454e;letter-spacing:0.216px;-webkit-text-stroke:0.35px #40454e;">azure-vote-front</div>
<div class="r" style="left:487.50px;top:747.40px;width:114.20px;height:29.00px;background:#eef2f7;border-radius:14.5px;"></div>
<div class="t" style="left:499.00px;top:754.00px;font-size:16px;color:#40454e;transform:scaleX(0.8183);transform-origin:0 0;-webkit-text-stroke:0.35px #40454e;">172.17.187.161</div>
<div class="t" style="left:488.00px;top:789.00px;font-size:17px;color:#40454e;letter-spacing:0.621px;-webkit-text-stroke:0.35px #40454e;">Visibility Only</div>
<div class="r" style="left:721.00px;top:706.50px;width:102.80px;height:29.00px;background:#eef2f7;border-radius:14.5px;"></div>
<svg class="s" style="left:726.40px;top:712.10px" width="18" height="18" viewBox="0 0 18 18"><circle cx="9" cy="9" r="8.7" fill="#d08ad9"/><rect x="4.3" y="3.8" width="9.6" height="10.6" rx="2.8" fill="#fff"/><path d="M6.6 6.4 V10.6 C6.6 12 8.6 12.6 10 11.6 L8.4 9.2" fill="none" stroke="#e2b4e8" stroke-width="1.6"/><circle cx="10.8" cy="6.6" r="1.1" fill="#dcaae3"/></svg>
<div class="t" style="left:750.00px;top:712.00px;font-size:16.5px;color:#40454e;transform:scaleX(0.9458);transform-origin:0 0;-webkit-text-stroke:0.35px #40454e;">Frontend</div>
<div class="r" style="left:830.00px;top:706.50px;width:110.60px;height:29.00px;background:#eef2f7;border-radius:14.5px;"></div>
<svg class="s" style="left:835.40px;top:712.10px" width="18" height="18" viewBox="0 0 18 18"><circle cx="9" cy="9" r="8.7" fill="#3a9ff0"/><polyline points="4.2,12.6 9.1,3.9 13.9,12.6" fill="none" stroke="#fff" stroke-width="2" stroke-linejoin="round" stroke-linecap="round"/><path d="M7.4 11 L9.1 8 L10.8 11 Z" fill="#9fd0f8"/></svg>
<div class="t" style="left:858.00px;top:712.00px;font-size:16.5px;color:#40454e;transform:scaleX(0.9642);transform-origin:0 0;-webkit-text-stroke:0.35px #40454e;">Votingapp</div>
<svg class="s" style="left:1116.00px;top:722.70px" width="40" height="14" viewBox="0 0 40 14"><line x1="2" y1="7" x2="31" y2="7" stroke="#2aa532" stroke-width="2.6"/><path d="M28 1.8 L37 7 L28 12.2 Z" fill="#2aa532"/></svg>
<div class="r" style="left:1187.50px;top:710.45px;width:155.50px;height:29.00px;background:#eef2f7;border-radius:14.5px;"></div>
<div class="r" style="left:1193.00px;top:716.15px;width:17.5px;height:17.5px;border-radius:50%;background:#9fb2c8"></div>
<div class="r" style="left:1197.25px;top:720.40px;width:9px;height:9px;border-radius:2px;background:#fff"></div>
<div class="t" style="left:1215.60px;top:717.00px;font-size:16px;color:#40454e;letter-spacing:0.186px;-webkit-text-stroke:0.35px #40454e;">azure-vote-back</div>
<div class="r" style="left:1187.50px;top:747.10px;width:116.25px;height:29.00px;background:#eef2f7;border-radius:14.5px;"></div>
<div class="t" style="left:1198.00px;top:754.00px;font-size:16px;color:#40454e;transform:scaleX(0.8453);transform-origin:0 0;-webkit-text-stroke:0.35px #40454e;">172.17.187.160</div>
<div class="t" style="left:1187.50px;top:789.00px;font-size:17px;color:#40454e;letter-spacing:0.621px;-webkit-text-stroke:0.35px #40454e;">Visibility Only</div>
<div class="r" style="left:1419.70px;top:706.90px;width:100.30px;height:29.00px;background:#eef2f7;border-radius:14.5px;"></div>
<svg class="s" style="left:1425.20px;top:712.30px" width="18" height="18" viewBox="0 0 18 18"><circle cx="9" cy="9" r="8.7" fill="#d08ad9"/><rect x="4.3" y="3.8" width="9.6" height="10.6" rx="2.8" fill="#fff"/><path d="M6.6 6.4 V10.6 C6.6 12 8.6 12.6 10 11.6 L8.4 9.2" fill="none" stroke="#e2b4e8" stroke-width="1.6"/><circle cx="10.8" cy="6.6" r="1.1" fill="#dcaae3"/></svg>
<div class="t" style="left:1449.00px;top:712.00px;font-size:16.5px;color:#40454e;transform:scaleX(0.9348);transform-origin:0 0;-webkit-text-stroke:0.35px #40454e;">Backend</div>
<div class="r" style="left:1526.70px;top:706.90px;width:109.60px;height:29.00px;background:#eef2f7;border-radius:14.5px;"></div>
<svg class="s" style="left:1532.20px;top:712.30px" width="18" height="18" viewBox="0 0 18 18"><circle cx="9" cy="9" r="8.7" fill="#3a9ff0"/><polyline points="4.2,12.6 9.1,3.9 13.9,12.6" fill="none" stroke="#fff" stroke-width="2" stroke-linejoin="round" stroke-linecap="round"/><path d="M7.4 11 L9.1 8 L10.8 11 Z" fill="#9fd0f8"/></svg>
<div class="t" style="left:1556.00px;top:712.00px;font-size:16.5px;color:#40454e;transform:scaleX(0.9506);transform-origin:0 0;-webkit-text-stroke:0.35px #40454e;">Votingapp</div>
<div class="r" style="left:1690.80px;top:710.20px;width:91.70px;height:29.00px;background:#eef2f7;border-radius:14.5px;"></div>
<div class="t" style="left:1702.00px;top:716.00px;font-size:17.5px;color:#40454e;transform:scaleX(0.8880);transform-origin:0 0;-webkit-text-stroke:0.35px #40454e;">6379 TCP</div>
<div class="t" style="left:1931.00px;top:714.00px;font-size:18.5px;color:#40454e;-webkit-text-stroke:0.35px #40454e;">34 Flows</div>
<svg class="s" style="left:1930.00px;top:744.90px" width="19" height="16" viewBox="0 0 19 16"><g fill="#1e222a"><path d="M3.2 1.5 Q3.2 0.6 4.1 0.6 H14.9 Q15.8 0.6 15.8 1.5 V9.5 H3.2 Z M4.8 2.3 V8 H14.2 V2.3 Z" fill-rule="evenodd"/><path d="M3 9.6 H16 L18.2 12 Q18.4 12.8 17.6 12.8 H1.4 Q0.6 12.8 0.8 12 Z"/></g></svg>
<div class="t" style="left:1953.60px;top:744.00px;font-size:18.5px;color:#40454e;transform:scaleX(0.9999);transform-origin:0 0;-webkit-text-stroke:0.35px #40454e;">upg container</div>
<div class="t" style="left:1931.00px;top:767.00px;font-size:18.5px;color:#40454e;letter-spacing:0.193px;-webkit-text-stroke:0.35px #40454e;">network</div>
<div class="t" style="left:2098.30px;top:709.00px;font-size:18px;color:#40454e;letter-spacing:0.397px;-webkit-text-stroke:0.35px #40454e;">01/08/2024,</div>
<div class="t" style="left:2098.30px;top:733.00px;font-size:18px;color:#40454e;letter-spacing:0.397px;-webkit-text-stroke:0.35px #40454e;">08:52:19</div>
<div class="t" style="left:2234.80px;top:709.00px;font-size:18px;color:#40454e;letter-spacing:0.407px;-webkit-text-stroke:0.35px #40454e;">01/08/2024,</div>
<div class="t" style="left:2234.80px;top:733.00px;font-size:18px;color:#40454e;letter-spacing:0.407px;-webkit-text-stroke:0.35px #40454e;">10:57:19</div>
<div class="t" style="left:322.50px;top:828.00px;font-size:17.5px;color:#2aa532;font-weight:700;letter-spacing:0.198px;-webkit-text-stroke:0.45px #2aa532;">Allowed</div>
<div class="t" style="left:322.50px;top:859.00px;font-size:16px;color:#40454e;letter-spacing:0.361px;-webkit-text-stroke:0.35px #40454e;">by Rule by Source</div>
<div class="r" style="left:487.50px;top:824.05px;width:156.50px;height:29.00px;background:#eef2f7;border-radius:14.5px;"></div>
<div class="r" style="left:493.50px;top:829.80px;width:17.5px;height:17.5px;border-radius:50%;background:#9fb2c8"></div>
<div class="r" style="left:497.75px;top:834.05px;width:9px;height:9px;border-radius:2px;background:#fff"></div>
<div class="t" style="left:516.30px;top:831.00px;font-size:16px;color:#40454e;letter-spacing:0.216px;-webkit-text-stroke:0.35px #40454e;">azure-vote-front</div>
<div class="r" style="left:487.50px;top:861.25px;width:114.20px;height:29.00px;background:#eef2f7;border-radius:14.5px;"></div>
<div class="t" style="left:499.00px;top:868.00px;font-size:16px;color:#40454e;transform:scaleX(0.8183);transform-origin:0 0;-webkit-text-stroke:0.35px #40454e;">172.17.187.161</div>
<div class="t" style="left:488.00px;top:903.00px;font-size:17px;color:#40454e;letter-spacing:0.621px;-webkit-text-stroke:0.35px #40454e;">Visibility Only</div>
<div class="r" style="left:721.00px;top:820.35px;width:102.80px;height:29.00px;background:#eef2f7;border-radius:14.5px;"></div>
<svg class="s" style="left:726.40px;top:825.95px" width="18" height="18" viewBox="0 0 18 18"><circle cx="9" cy="9" r="8.7" fill="#d08ad9"/><rect x="4.3" y="3.8" width="9.6" height="10.6" rx="2.8" fill="#fff"/><path d="M6.6 6.4 V10.6 C6.6 12 8.6 12.6 10 11.6 L8.4 9.2" fill="none" stroke="#e2b4e8" stroke-width="1.6"/><circle cx="10.8" cy="6.6" r="1.1" fill="#dcaae3"/></svg>
<div class="t" style="left:750.00px;top:826.00px;font-size:16.5px;color:#40454e;transform:scaleX(0.9458);transform-origin:0 0;-webkit-text-stroke:0.35px #40454e;">Frontend</div>
<div class="r" style="left:830.00px;top:820.35px;width:110.60px;height:29.00px;background:#eef2f7;border-radius:14.5px;"></div>
<svg class="s" style="left:835.40px;top:825.95px" width="18" height="18" viewBox="0 0 18 18"><circle cx="9" cy="9" r="8.7" fill="#3a9ff0"/><polyline points="4.2,12.6 9.1,3.9 13.9,12.6" fill="none" stroke="#fff" stroke-width="2" stroke-linejoin="round" stroke-linecap="round"/><path d="M7.4 11 L9.1 8 L10.8 11 Z" fill="#9fd0f8"/></svg>
<div class="t" style="left:858.00px;top:826.00px;font-size:16.5px;color:#40454e;transform:scaleX(0.9642);transform-origin:0 0;-webkit-text-stroke:0.35px #40454e;">Votingapp</div>
<svg class="s" style="left:1116.00px;top:836.55px" width="40" height="14" viewBox="0 0 40 14"><line x1="2" y1="7" x2="31" y2="7" stroke="#2aa532" stroke-width="2.6"/><path d="M28 1.8 L37 7 L28 12.2 Z" fill="#2aa532"/></svg>
<div class="r" style="left:1187.50px;top:824.30px;width:155.50px;height:29.00px;background:#eef2f7;border-radius:14.5px;"></div>
<div class="r" style="left:1193.00px;top:830.00px;width:17.5px;height:17.5px;border-radius:50%;background:#9fb2c8"></div>
<div class="r" style="left:1197.25px;top:834.25px;width:9px;height:9px;border-radius:2px;background:#fff"></div>
<div class="t" style="left:1215.60px;top:831.00px;font-size:16px;color:#40454e;letter-spacing:0.186px;-webkit-text-stroke:0.35px #40454e;">azure-vote-back</div>
<div class="r" style="left:1187.50px;top:860.95px;width:109.80px;height:29.00px;background:#eef2f7;border-radius:14.5px;"></div>
<div class="t" style="left:1198.00px;top:868.00px;font-size:16px;color:#40454e;transform:scaleX(0.9407);transform-origin:0 0;-webkit-text-stroke:0.35px #40454e;">172.21.56.49</div>
<div class="t" style="left:1187.50px;top:903.00px;font-size:17px;color:#40454e;letter-spacing:0.621px;-webkit-text-stroke:0.35px #40454e;">Visibility Only</div>
<div class="r" style="left:1419.70px;top:820.75px;width:153.30px;height:29.00px;background:#eef2f7;border-radius:14.5px;"></div>
<svg class="s" style="left:1425.20px;top:826.15px" width="18" height="18" viewBox="0 0 18 18"><circle cx="9" cy="9" r="8.7" fill="#d08ad9"/><rect x="4.3" y="3.8" width="9.6" height="10.6" rx="2.8" fill="#fff"/><path d="M6.6 6.4 V10.6 C6.6 12 8.6 12.6 10 11.6 L8.4 9.2" fill="none" stroke="#e2b4e8" stroke-width="1.6"/><circle cx="10.8" cy="6.6" r="1.1" fill="#dcaae3"/></svg>
<div class="t" style="left:1449.00px;top:826.00px;font-size:16.5px;color:#40454e;transform:scaleX(0.9479);transform-origin:0 0;-webkit-text-stroke:0.35px #40454e;">BackendService</div>
<div class="r" style="left:1419.70px;top:855.70px;width:111.10px;height:29.00px;background:#eef2f7;border-radius:14.5px;"></div>
<svg class="s" style="left:1425.20px;top:861.15px" width="18" height="18" viewBox="0 0 18 18"><circle cx="9" cy="9" r="8.7" fill="#3a9ff0"/><polyline points="4.2,12.6 9.1,3.9 13.9,12.6" fill="none" stroke="#fff" stroke-width="2" stroke-linejoin="round" stroke-linecap="round"/><path d="M7.4 11 L9.1 8 L10.8 11 Z" fill="#9fd0f8"/></svg>
<div class="t" style="left:1449.00px;top:861.00px;font-size:16.5px;color:#40454e;transform:scaleX(0.9670);transform-origin:0 0;-webkit-text-stroke:0.35px #40454e;">Votingapp</div>
<div class="r" style="left:1690.80px;top:824.05px;width:91.70px;height:29.00px;background:#eef2f7;border-radius:14.5px;"></div>
<div class="t" style="left:1702.00px;top:830.00px;font-size:17.5px;color:#40454e;transform:scaleX(0.8880);transform-origin:0 0;-webkit-text-stroke:0.35px #40454e;">6379 TCP</div>
<div class="t" style="left:1931.00px;top:828.00px;font-size:18.5px;color:#40454e;-webkit-text-stroke:0.35px #40454e;">30 Flows</div>
<svg class="s" style="left:1930.00px;top:858.75px" width="19" height="16" viewBox="0 0 19 16"><g fill="#1e222a"><path d="M3.2 1.5 Q3.2 0.6 4.1 0.6 H14.9 Q15.8 0.6 15.8 1.5 V9.5 H3.2 Z M4.8 2.3 V8 H14.2 V2.3 Z" fill-rule="evenodd"/><path d="M3 9.6 H16 L18.2 12 Q18.4 12.8 17.6 12.8 H1.4 Q0.6 12.8 0.8 12 Z"/></g></svg>
<div class="t" style="left:1953.60px;top:858.00px;font-size:18.5px;color:#40454e;transform:scaleX(0.9999);transform-origin:0 0;-webkit-text-stroke:0.35px #40454e;">upg container</div>
<div class="t" style="left:1931.00px;top:880.00px;font-size:18.5px;color:#40454e;letter-spacing:0.193px;-webkit-text-stroke:0.35px #40454e;">network</div>
<div class="t" style="left:2098.30px;top:823.00px;font-size:18px;color:#40454e;letter-spacing:0.397px;-webkit-text-stroke:0.35px #40454e;">01/08/2024,</div>
<div class="t" style="left:2098.30px;top:847.00px;font-size:18px;color:#40454e;letter-spacing:0.397px;-webkit-text-stroke:0.35px #40454e;">09:57:19</div>
<div class="t" style="left:2234.80px;top:823.00px;font-size:18px;color:#40454e;letter-spacing:0.407px;-webkit-text-stroke:0.35px #40454e;">01/08/2024,</div>
<div class="t" style="left:2234.80px;top:847.00px;font-size:18px;color:#40454e;letter-spacing:0.407px;-webkit-text-stroke:0.35px #40454e;">10:57:19</div>
<div class="t" style="left:322.50px;top:942.00px;font-size:17.5px;color:#2aa532;font-weight:700;letter-spacing:0.198px;-webkit-text-stroke:0.45px #2aa532;">Allowed</div>
<div class="t" style="left:322.50px;top:972.00px;font-size:16px;color:#40454e;letter-spacing:0.361px;-webkit-text-stroke:0.35px #40454e;">by Rule by Source</div>
<div class="r" style="left:487.50px;top:937.90px;width:156.50px;height:29.00px;background:#eef2f7;border-radius:14.5px;"></div>
<div class="r" style="left:493.50px;top:943.65px;width:17.5px;height:17.5px;border-radius:50%;background:#9fb2c8"></div>
<div class="r" style="left:497.75px;top:947.90px;width:9px;height:9px;border-radius:2px;background:#fff"></div>
<div class="t" style="left:516.30px;top:945.00px;font-size:16px;color:#40454e;letter-spacing:0.216px;-webkit-text-stroke:0.35px #40454e;">azure-vote-front</div>
<div class="r" style="left:487.50px;top:975.10px;width:114.20px;height:29.00px;background:#eef2f7;border-radius:14.5px;"></div>
<div class="t" style="left:499.00px;top:982.00px;font-size:16px;color:#40454e;transform:scaleX(0.8183);transform-origin:0 0;-webkit-text-stroke:0.35px #40454e;">172.17.187.161</div>
<div class="t" style="left:488.00px;top:1016.00px;font-size:17px;color:#40454e;letter-spacing:0.621px;-webkit-text-stroke:0.35px #40454e;">Visibility Only</div>
<div class="r" style="left:721.00px;top:934.20px;width:102.80px;height:29.00px;background:#eef2f7;border-radius:14.5px;"></div>
<svg class="s" style="left:726.40px;top:939.80px" width="18" height="18" viewBox="0 0 18 18"><circle cx="9" cy="9" r="8.7" fill="#d08ad9"/><rect x="4.3" y="3.8" width="9.6" height="10.6" rx="2.8" fill="#fff"/><path d="M6.6 6.4 V10.6 C6.6 12 8.6 12.6 10 11.6 L8.4 9.2" fill="none" stroke="#e2b4e8" stroke-width="1.6"/><circle cx="10.8" cy="6.6" r="1.1" fill="#dcaae3"/></svg>
<div class="t" style="left:750.00px;top:940.00px;font-size:16.5px;color:#40454e;transform:scaleX(0.9458);transform-origin:0 0;-webkit-text-stroke:0.35px #40454e;">Frontend</div>
<div class="r" style="left:830.00px;top:934.20px;width:110.60px;height:29.00px;background:#eef2f7;border-radius:14.5px;"></div>
<svg class="s" style="left:835.40px;top:939.80px" width="18" height="18" viewBox="0 0 18 18"><circle cx="9" cy="9" r="8.7" fill="#3a9ff0"/><polyline points="4.2,12.6 9.1,3.9 13.9,12.6" fill="none" stroke="#fff" stroke-width="2" stroke-linejoin="round" stroke-linecap="round"/><path d="M7.4 11 L9.1 8 L10.8 11 Z" fill="#9fd0f8"/></svg>
<div class="t" style="left:858.00px;top:940.00px;font-size:16.5px;color:#40454e;transform:scaleX(0.9642);transform-origin:0 0;-webkit-text-stroke:0.35px #40454e;">Votingapp</div>
<svg class="s" style="left:1116.00px;top:950.40px" width="40" height="14" viewBox="0 0 40 14"><line x1="2" y1="7" x2="31" y2="7" stroke="#2aa532" stroke-width="2.6"/><path d="M28 1.8 L37 7 L28 12.2 Z" fill="#2aa532"/></svg>
<div class="r" style="left:1187.50px;top:938.15px;width:155.50px;height:29.00px;background:#eef2f7;border-radius:14.5px;"></div>
<div class="r" style="left:1193.00px;top:943.85px;width:17.5px;height:17.5px;border-radius:50%;background:#9fb2c8"></div>
<div class="r" style="left:1197.25px;top:948.10px;width:9px;height:9px;border-radius:2px;background:#fff"></div>
<div class="t" style="left:1215.60px;top:945.00px;font-size:16px;color:#40454e;letter-spacing:0.186px;-webkit-text-stroke:0.35px #40454e;">azure-vote-back</div>
<div class="r" style="left:1187.50px;top:974.80px;width:109.80px;height:29.00px;background:#eef2f7;border-radius:14.5px;"></div>
<div class="t" style="left:1198.00px;top:982.00px;font-size:16px;color:#40454e;transform:scaleX(0.9407);transform-origin:0 0;-webkit-text-stroke:0.35px #40454e;">172.21.56.49</div>
<div class="t" style="left:1187.50px;top:1016.00px;font-size:17px;color:#40454e;letter-spacing:0.621px;-webkit-text-stroke:0.35px #40454e;">Visibility Only</div>
<div class="r" style="left:1419.70px;top:934.60px;width:153.30px;height:29.00px;background:#eef2f7;border-radius:14.5px;"></div>
<svg class="s" style="left:1425.20px;top:940.00px" width="18" height="18" viewBox="0 0 18 18"><circle cx="9" cy="9" r="8.7" fill="#d08ad9"/><rect x="4.3" y="3.8" width="9.6" height="10.6" rx="2.8" fill="#fff"/><path d="M6.6 6.4 V10.6 C6.6 12 8.6 12.6 10 11.6 L8.4 9.2" fill="none" stroke="#e2b4e8" stroke-width="1.6"/><circle cx="10.8" cy="6.6" r="1.1" fill="#dcaae3"/></svg>
<div class="t" style="left:1449.00px;top:940.00px;font-size:16.5px;color:#40454e;transform:scaleX(0.9479);transform-origin:0 0;-webkit-text-stroke:0.35px #40454e;">BackendService</div>
<div class="r" style="left:1419.70px;top:969.55px;width:111.10px;height:29.00px;background:#eef2f7;border-radius:14.5px;"></div>
<svg class="s" style="left:1425.20px;top:975.00px" width="18" height="18" viewBox="0 0 18 18"><circle cx="9" cy="9" r="8.7" fill="#3a9ff0"/><polyline points="4.2,12.6 9.1,3.9 13.9,12.6" fill="none" stroke="#fff" stroke-width="2" stroke-linejoin="round" stroke-linecap="round"/><path d="M7.4 11 L9.1 8 L10.8 11 Z" fill="#9fd0f8"/></svg>
<div class="t" style="left:1449.00px;top:975.00px;font-size:16.5px;color:#40454e;transform:scaleX(0.9670);transform-origin:0 0;-webkit-text-stroke:0.35px #40454e;">Votingapp</div>
<div class="r" style="left:1690.80px;top:937.90px;width:91.70px;height:29.00px;background:#eef2f7;border-radius:14.5px;"></div>
<div class="t" style="left:1702.00px;top:944.00px;font-size:17.5px;color:#40454e;transform:scaleX(0.8880);transform-origin:0 0;-webkit-text-stroke:0.35px #40454e;">6379 TCP</div>
<div class="t" style="left:1931.00px;top:941.00px;font-size:18.5px;color:#40454e;letter-spacing:0.045px;-webkit-text-stroke:0.35px #40454e;">4 Flows</div>
<svg class="s" style="left:1930.00px;top:972.60px" width="19" height="16" viewBox="0 0 19 16"><g fill="#1e222a"><path d="M3.2 1.5 Q3.2 0.6 4.1 0.6 H14.9 Q15.8 0.6 15.8 1.5 V9.5 H3.2 Z M4.8 2.3 V8 H14.2 V2.3 Z" fill-rule="evenodd"/><path d="M3 9.6 H16 L18.2 12 Q18.4 12.8 17.6 12.8 H1.4 Q0.6 12.8 0.8 12 Z"/></g></svg>
<div class="t" style="left:1953.60px;top:972.00px;font-size:18.5px;color:#40454e;transform:scaleX(0.9999);transform-origin:0 0;-webkit-text-stroke:0.35px #40454e;">upg container</div>
<div class="t" style="left:1931.00px;top:994.00px;font-size:18.5px;color:#40454e;letter-spacing:0.193px;-webkit-text-stroke:0.35px #40454e;">network</div>
<div class="t" style="left:2098.30px;top:937.00px;font-size:18px;color:#40454e;letter-spacing:0.397px;-webkit-text-stroke:0.35px #40454e;">01/08/2024,</div>
<div class="t" style="left:2098.30px;top:961.00px;font-size:18px;color:#40454e;letter-spacing:0.397px;-webkit-text-stroke:0.35px #40454e;">08:52:19</div>
<div class="t" style="left:2234.80px;top:937.00px;font-size:18px;color:#40454e;letter-spacing:0.407px;-webkit-text-stroke:0.35px #40454e;">01/08/2024,</div>
<div class="t" style="left:2234.80px;top:961.00px;font-size:18px;color:#40454e;letter-spacing:0.407px;-webkit-text-stroke:0.35px #40454e;">09:51:35</div>
<div class="t" style="left:322.50px;top:1056.00px;font-size:17.5px;color:#2aa532;font-weight:700;letter-spacing:0.198px;-webkit-text-stroke:0.45px #2aa532;">Allowed</div>
<div class="t" style="left:322.50px;top:1086.00px;font-size:16px;color:#40454e;letter-spacing:0.361px;-webkit-text-stroke:0.35px #40454e;">by Rule by Source</div>
<div class="r" style="left:487.50px;top:1051.75px;width:156.50px;height:29.00px;background:#eef2f7;border-radius:14.5px;"></div>
<div class="r" style="left:493.50px;top:1057.50px;width:17.5px;height:17.5px;border-radius:50%;background:#9fb2c8"></div>
<div class="r" style="left:497.75px;top:1061.75px;width:9px;height:9px;border-radius:2px;background:#fff"></div>
<div class="t" style="left:516.30px;top:1059.00px;font-size:16px;color:#40454e;letter-spacing:0.216px;-webkit-text-stroke:0.35px #40454e;">azure-vote-front</div>
<div class="r" style="left:487.50px;top:1088.95px;width:114.20px;height:29.00px;background:#eef2f7;border-radius:14.5px;"></div>
<div class="t" style="left:499.00px;top:1095.00px;font-size:16px;color:#40454e;transform:scaleX(0.8183);transform-origin:0 0;-webkit-text-stroke:0.35px #40454e;">172.17.187.161</div>
<div class="r" style="left:721.00px;top:1048.05px;width:102.80px;height:29.00px;background:#eef2f7;border-radius:14.5px;"></div>
<svg class="s" style="left:726.40px;top:1053.65px" width="18" height="18" viewBox="0 0 18 18"><circle cx="9" cy="9" r="8.7" fill="#d08ad9"/><rect x="4.3" y="3.8" width="9.6" height="10.6" rx="2.8" fill="#fff"/><path d="M6.6 6.4 V10.6 C6.6 12 8.6 12.6 10 11.6 L8.4 9.2" fill="none" stroke="#e2b4e8" stroke-width="1.6"/><circle cx="10.8" cy="6.6" r="1.1" fill="#dcaae3"/></svg>
<div class="t" style="left:750.00px;top:1054.00px;font-size:16.5px;color:#40454e;transform:scaleX(0.9458);transform-origin:0 0;-webkit-text-stroke:0.35px #40454e;">Frontend</div>
<div class="r" style="left:830.00px;top:1048.05px;width:110.60px;height:29.00px;background:#eef2f7;border-radius:14.5px;"></div>
<svg class="s" style="left:835.40px;top:1053.65px" width="18" height="18" viewBox="0 0 18 18"><circle cx="9" cy="9" r="8.7" fill="#3a9ff0"/><polyline points="4.2,12.6 9.1,3.9 13.9,12.6" fill="none" stroke="#fff" stroke-width="2" stroke-linejoin="round" stroke-linecap="round"/><path d="M7.4 11 L9.1 8 L10.8 11 Z" fill="#9fd0f8"/></svg>
<div class="t" style="left:858.00px;top:1054.00px;font-size:16.5px;color:#40454e;transform:scaleX(0.9642);transform-origin:0 0;-webkit-text-stroke:0.35px #40454e;">Votingapp</div>
<svg class="s" style="left:1116.00px;top:1064.25px" width="40" height="14" viewBox="0 0 40 14"><line x1="2" y1="7" x2="31" y2="7" stroke="#2aa532" stroke-width="2.6"/><path d="M28 1.8 L37 7 L28 12.2 Z" fill="#2aa532"/></svg>
<div class="r" style="left:1187.50px;top:1052.00px;width:96.50px;height:29.00px;background:#eef2f7;border-radius:14.5px;"></div>
<div class="t" style="left:1198.00px;top:1059.00px;font-size:16px;color:#40454e;transform:scaleX(0.8869);transform-origin:0 0;-webkit-text-stroke:0.35px #40454e;">172.21.0.10</div>
<div class="r" style="left:1690.80px;top:1051.75px;width:75.00px;height:29.00px;background:#eef2f7;border-radius:14.5px;"></div>
<div class="t" style="left:1702.00px;top:1058.00px;font-size:17.5px;color:#40454e;transform:scaleX(0.8751);transform-origin:0 0;-webkit-text-stroke:0.35px #40454e;">53 UDP</div>
<div class="t" style="left:1931.00px;top:1055.00px;font-size:18.5px;color:#40454e;letter-spacing:0.045px;-webkit-text-stroke:0.35px #40454e;">4 Flows</div>
<svg class="s" style="left:1930.00px;top:1086.45px" width="19" height="16" viewBox="0 0 19 16"><g fill="#1e222a"><path d="M3.2 1.5 Q3.2 0.6 4.1 0.6 H14.9 Q15.8 0.6 15.8 1.5 V9.5 H3.2 Z M4.8 2.3 V8 H14.2 V2.3 Z" fill-rule="evenodd"/><path d="M3 9.6 H16 L18.2 12 Q18.4 12.8 17.6 12.8 H1.4 Q0.6 12.8 0.8 12 Z"/></g></svg>
<div class="t" style="left:1953.60px;top:1086.00px;font-size:18.5px;color:#40454e;transform:scaleX(0.9999);transform-origin:0 0;-webkit-text-stroke:0.35px #40454e;">upg container</div>
<div class="t" style="left:1931.00px;top:1108.00px;font-size:18.5px;color:#40454e;letter-spacing:0.193px;-webkit-text-stroke:0.35px #40454e;">network</div>
<div class="t" style="left:2098.30px;top:1051.00px;font-size:18px;color:#40454e;letter-spacing:0.397px;-webkit-text-stroke:0.35px #40454e;">01/08/2024,</div>
<div class="t" style="left:2098.30px;top:1075.00px;font-size:18px;color:#40454e;letter-spacing:0.397px;-webkit-text-stroke:0.35px #40454e;">08:52:19</div>
<div class="t" style="left:2234.80px;top:1051.00px;font-size:18px;color:#40454e;letter-spacing:0.407px;-webkit-text-stroke:0.35px #40454e;">01/08/2024,</div>
<div class="t" style="left:2234.80px;top:1075.00px;font-size:18px;color:#40454e;letter-spacing:0.407px;-webkit-text-stroke:0.35px #40454e;">08:52:19</div>
<svg class="s" style="left:0;top:0" width="2398" height="1131"><line x1="253.0" y1="567.6" x2="443.4" y2="546.9" stroke="#ec7e30" stroke-width="2.2"/><path d="M468.8 544.2 L442.9 560.6 L440.0 533.7 Z" fill="#ec7e30"/><line x1="253.0" y1="594.0" x2="443.9" y2="636.9" stroke="#ec7e30" stroke-width="2.2"/><path d="M468.8 642.5 L439.0 649.6 L444.9 623.3 Z" fill="#ec7e30"/><line x1="239.6" y1="614.7" x2="447.7" y2="742.1" stroke="#ec7e30" stroke-width="2.2"/><path d="M469.4 755.4 L438.9 752.6 L453.0 729.5 Z" fill="#ec7e30"/><line x1="1405.8" y1="560.1" x2="1330.0" y2="548.1" stroke="#ec7e30" stroke-width="2.2"/><path d="M1304.8 544.1 L1334.1 535.1 L1329.8 561.7 Z" fill="#ec7e30"/><line x1="1404.1" y1="594.0" x2="1322.5" y2="743.0" stroke="#ec7e30" stroke-width="2.2"/><path d="M1310.3 765.4 L1311.7 734.8 L1335.3 747.8 Z" fill="#ec7e30"/><line x1="1395.0" y1="900.8" x2="1344.7" y2="890.4" stroke="#ec7e30" stroke-width="2.2"/><path d="M1319.7 885.3 L1349.4 877.6 L1343.9 904.1 Z" fill="#ec7e30"/><line x1="1405.0" y1="927.2" x2="1338.3" y2="986.4" stroke="#ec7e30" stroke-width="2.2"/><path d="M1319.2 1003.3 L1330.8 975.0 L1348.7 995.2 Z" fill="#ec7e30"/></svg>
<div class="t" style="left:33.80px;top:559.00px;font-size:37.5px;color:#ec7e30;transform:scaleX(1.0394);transform-origin:0 0;">Src Pod IPs</div>
<div class="t" style="left:1432.00px;top:528.00px;font-size:37.5px;color:#ec7e30;transform:scaleX(1.0525);transform-origin:0 0;">Dst Pod IPs</div>
<div class="t" style="left:1414.20px;top:887.00px;font-size:37.5px;color:#ec7e30;transform:scaleX(1.0575);transform-origin:0 0;">Dst Cluster IPs</div>
</div>
</body></html>
